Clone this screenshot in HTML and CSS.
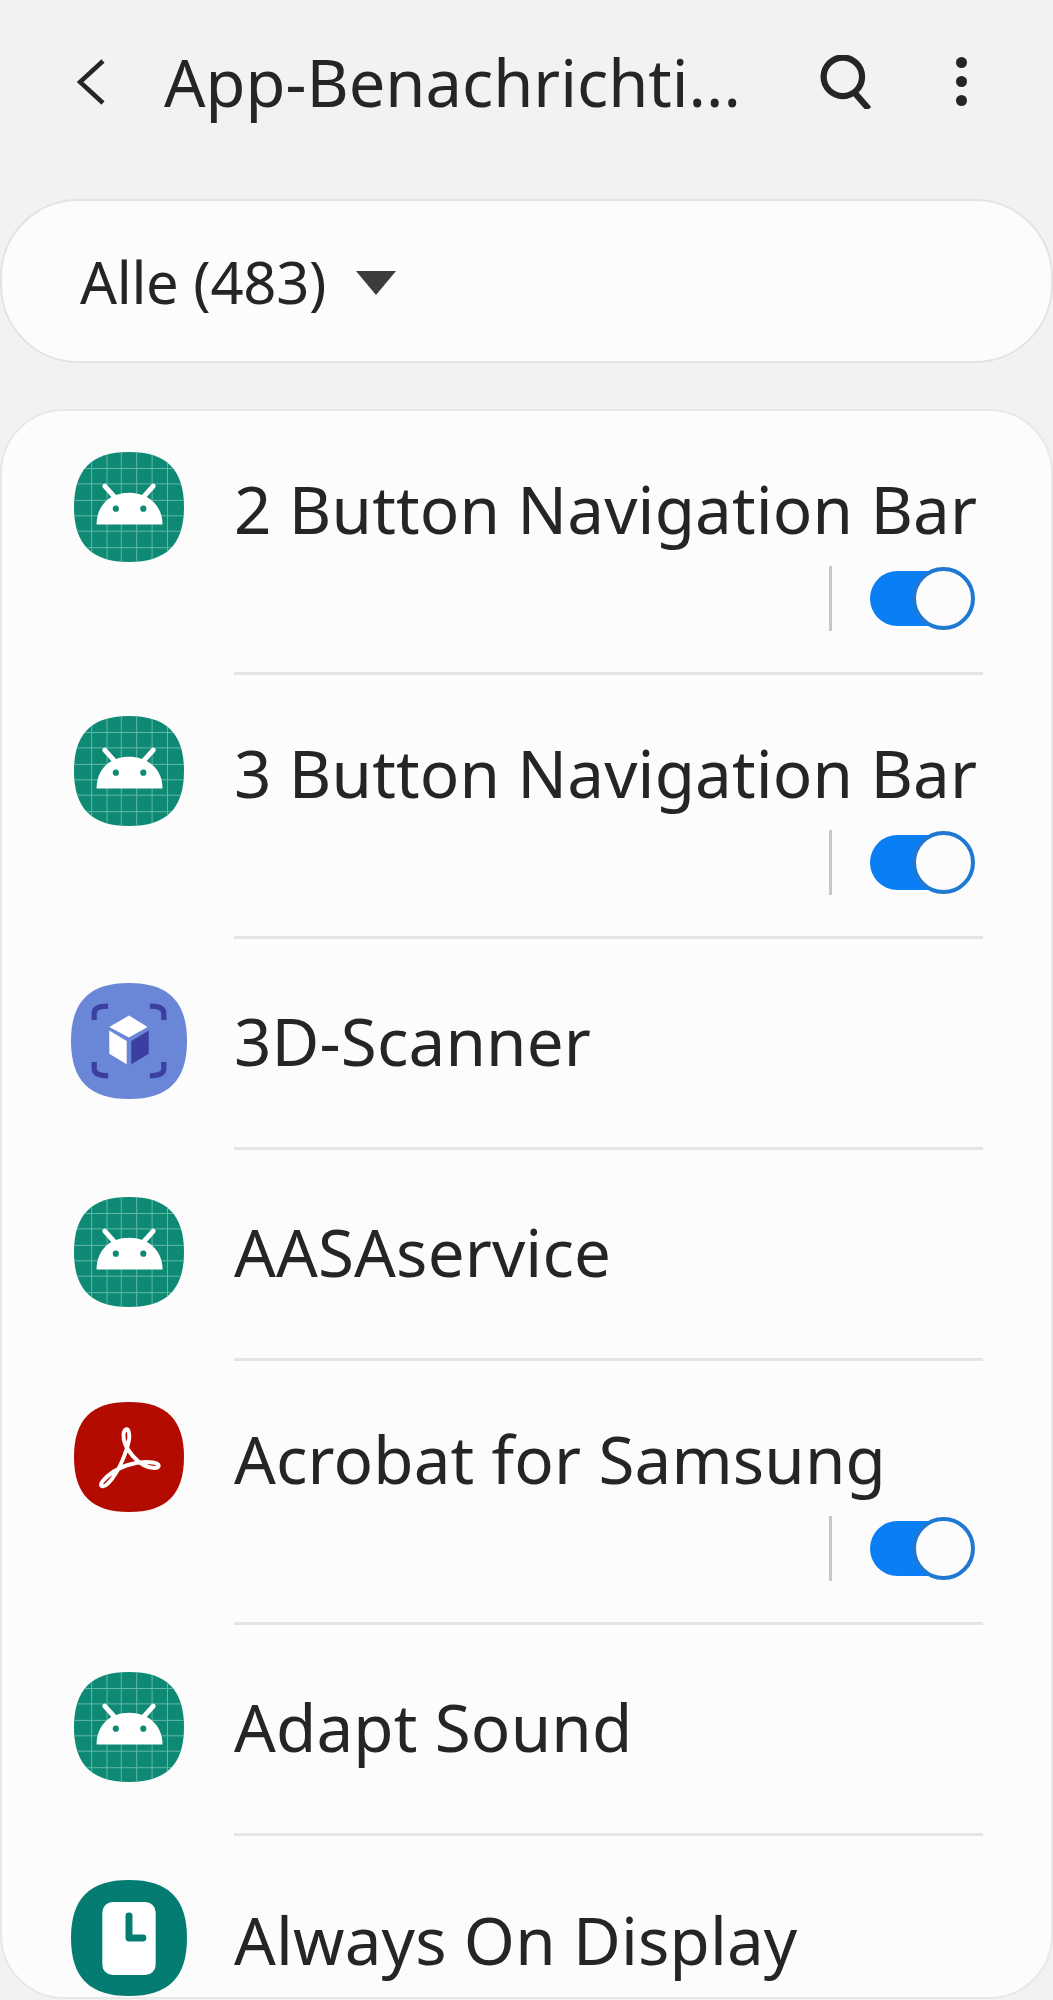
FILE: index.html
```html
<!DOCTYPE html>
<html lang="de">
<head>
    <meta charset="UTF-8">
    <meta name="viewport" content="width=device-width, initial-scale=1.0">
    <title>App-Benachrichtigungen</title>
    <link rel="stylesheet" href="styles.css">
</head>
<body>
    <svg class="defs" width="0" height="0">
        <defs>
            <path id="squircle" d="M50 0C84 0 100 16 100 50C100 84 84 100 50 100C16 100 0 84 0 50C0 16 16 0 50 0Z"/>
            <clipPath id="squircle-clip"><use href="#squircle"/></clipPath>
            <symbol id="android" viewBox="0 0 100 100">
                <use href="#squircle" fill="#0e8a74"/>
                <g stroke="#62b8a8" stroke-width="0.9" clip-path="url(#squircle-clip)">
                    <path d="M0 15H100M0 29H100M0 44H100M0 58H100M0 72H100M0 87H100"/>
                    <path d="M16 0V100M30 0V100M43 0V100M57 0V100M71 0V100M85 0V100"/>
                </g>
                <path d="M20.500 66C20.500 48 33 37 50 37C67 37 80.500 48 80.500 66Z" fill="#fff"/>
                <path d="M28 31L37 41M72 31L63 41" stroke="#fff" stroke-width="4.500" stroke-linecap="round"/>
                <circle cx="38" cy="51.500" r="2.800" fill="#0e8a74"/>
                <circle cx="63" cy="51.500" r="2.800" fill="#0e8a74"/>
            </symbol>
        </defs>
    </svg>

    <div class="screen">
        <header class="topbar">
            <svg class="back" viewBox="0 0 28 46"><path d="M26 2L3 23L26 44"/></svg>
            <h1 class="title">App-Benachrichti...</h1>
            <svg class="search" viewBox="0 0 52 52"><circle cx="22" cy="21" r="18.500"/><path d="M33 36L47 52"/></svg>
            <div class="more"><span></span><span></span><span></span></div>
        </header>

        <div class="filter">
            <span class="filter-label">Alle (483)</span>
            <span class="filter-arrow"></span>
        </div>

        <section class="list">
            <div class="row has-toggle">
                <svg class="icon"><use href="#android"/></svg>
                <div class="row-body">
                    <div class="name">2 Button Navigation Bar</div>
                    <div class="controls"><span class="divider"></span><span class="toggle"></span></div>
                </div>
            </div>
            <div class="row has-toggle">
                <svg class="icon"><use href="#android"/></svg>
                <div class="row-body">
                    <div class="name">3 Button Navigation Bar</div>
                    <div class="controls"><span class="divider"></span><span class="toggle"></span></div>
                </div>
            </div>
            <div class="row">
                <svg class="icon icon-large" viewBox="0 0 100 100">
                    <use href="#squircle" fill="#6a86d6"/>
                    <path d="M20 32V26Q20 20 32 20M68 20Q80 20 80 26V32M80 68V74Q80 80 68 80M32 80Q20 80 20 74V68" fill="none" stroke="#3b3fa0" stroke-width="4.500"/>
                    <path d="M50 28L66 38L50 47L33 38Z" fill="#fff"/>
                    <path d="M33 41L48 50V70L33 61Z" fill="#fff"/>
                    <path d="M67 41L52 50V70L67 61Z" fill="#3b3fa0"/>
                </svg>
                <div class="row-body">
                    <div class="name">3D-Scanner</div>
                </div>
            </div>
            <div class="row">
                <svg class="icon"><use href="#android"/></svg>
                <div class="row-body">
                    <div class="name">AASAservice</div>
                </div>
            </div>
            <div class="row has-toggle">
                <svg class="icon" viewBox="0 0 100 100">
                    <use href="#squircle" fill="#b30b00"/>
                    <path d="M26 72C22 77 27 78 31 74C42 63 52 36 50 28C49 23 46 24 45 29C44 42 60 60 73 60C79 60 78 56 72 55C58 53 38 58 26 72Z" fill="none" stroke="#fff" stroke-width="3.600" stroke-linejoin="round"/>
                </svg>
                <div class="row-body">
                    <div class="name">Acrobat for Samsung</div>
                    <div class="controls"><span class="divider"></span><span class="toggle"></span></div>
                </div>
            </div>
            <div class="row">
                <svg class="icon"><use href="#android"/></svg>
                <div class="row-body">
                    <div class="name">Adapt Sound</div>
                </div>
            </div>
            <div class="row last">
                <svg class="icon icon-large" viewBox="0 0 100 100">
                    <use href="#squircle" fill="#047c72"/>
                    <rect x="27" y="19" width="46" height="63" rx="9" fill="#fff"/>
                    <path d="M50 31V50H62" fill="none" stroke="#047c72" stroke-width="6" stroke-linecap="round" stroke-linejoin="round"/>
                </svg>
                <div class="row-body">
                    <div class="name">Always On Display</div>
                </div>
            </div>
        </section>
    </div>
</body>
</html>
```

FILE: styles.css
```css
body {
    margin: 0;
    background: #f2f2f2;
    font-family: "Noto Sans", sans-serif;
    color: #252525;
}
.defs {
    display: block;
    height: 0;
}
.screen {
    height: 2000px;
    overflow: hidden;
}
.topbar {
    display: flex;
    align-items: center;
    height: 163px;
    padding: 0 0 0 77px;
    box-sizing: border-box;
}
.back {
    width: 28px;
    height: 46px;
    fill: none;
    stroke: #252525;
    stroke-width: 4.5;
}
.title {
    width: 656px;
    margin: 0 0 0 59px;
    font-size: 65px;
    font-weight: 400;
    white-space: nowrap;
}
.search {
    width: 54px;
    height: 54px;
    fill: none;
    stroke: #252525;
    stroke-width: 6;
}
.more {
    display: flex;
    flex-direction: column;
    gap: 8px;
    margin-left: 82px;
}
.more span {
    display: block;
    width: 11px;
    height: 11px;
    border-radius: 50%;
    background: #252525;
}
.filter {
    display: flex;
    align-items: center;
    height: 164px;
    margin-top: 36px;
    padding-left: 78px;
    box-sizing: border-box;
    background: #fcfcfc;
    border: 2px solid #e3e3e3;
    border-radius: 78px;
}
.filter-label {
    font-size: 58px;
    letter-spacing: -0.3px;
}
.filter-arrow {
    width: 0;
    height: 0;
    margin: 4px 0 0 30px;
    border-left: 20px solid transparent;
    border-right: 20px solid transparent;
    border-top: 24px solid #3c3c3c;
}
.list {
    height: 1590px;
    margin-top: 46px;
    box-sizing: border-box;
    background: #fcfcfc;
    border: 2px solid #e8e8e8;
    border-radius: 64px;
    overflow: hidden;
}
.row {
    display: flex;
    align-items: center;
    height: 211px;
    padding-left: 69px;
    box-sizing: border-box;
}
.row.has-toggle {
    align-items: flex-start;
    height: 264px;
}
.icon {
    flex: none;
    width: 110px;
    height: 110px;
    margin: 0 50px 8px 3px;
}
.has-toggle .icon {
    margin: 41px 50px 0 3px;
}
.icon-large {
    width: 116px;
    height: 116px;
    margin: 0 47px 8px 0;
}
.row-body {
    flex: 1;
    align-self: stretch;
    display: flex;
    flex-direction: column;
    justify-content: center;
    margin-right: 68px;
    padding-bottom: 4px;
    border-bottom: 3px solid #e4e4e4;
}
.last .row-body {
    border-bottom: none;
}
.has-toggle .row-body {
    justify-content: flex-start;
    padding: 58px 0 0;
}
.name {
    font-size: 65.500px;
    line-height: 80px;
    letter-spacing: 0.15px;
    white-space: nowrap;
}
.controls {
    display: flex;
    justify-content: flex-end;
    align-items: center;
    gap: 38px;
    margin-top: 17px;
    padding-right: 8px;
}
.divider {
    width: 3px;
    height: 65px;
    background: #c8c8c8;
}
.toggle {
    position: relative;
    width: 96px;
    height: 55px;
    margin-right: 9px;
    border-radius: 28px;
    background: #0a7ff5;
}
.toggle::after {
    content: "";
    position: absolute;
    top: -4px;
    right: -9px;
    width: 55px;
    height: 55px;
    border: 4px solid #1f78d1;
    border-radius: 50%;
    background: #fcfcfc;
}
```
